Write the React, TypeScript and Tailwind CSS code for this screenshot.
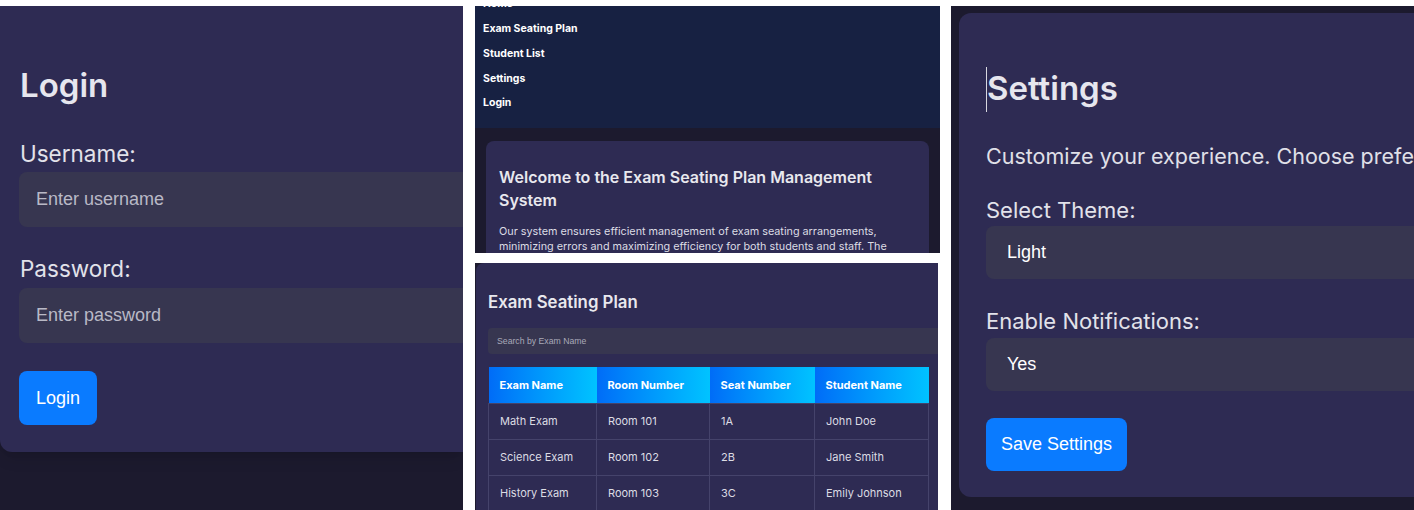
import React from "react";

const rows = [
  { exam: "Math Exam", room: "Room 101", seat: "1A", student: "John Doe" },
  { exam: "Science Exam", room: "Room 102", seat: "2B", student: "Jane Smith" },
  { exam: "History Exam", room: "Room 103", seat: "3C", student: "Emily Johnson" },
];

const heads = ["Exam Name", "Room Number", "Seat Number", "Student Name"];
const widths = ["w-[108px]", "w-[113px]", "w-[105px]", "w-[114px]"];

function LoginPanel() {
  return (
    <section className="w-[463px] shrink-0 h-full bg-[#1c1a2e] overflow-hidden">
      <div className="h-[446px] bg-[#2e2b53] rounded-bl-xl px-[19px] pt-[58px] shadow-lg">
        <h1 className="text-[33px] leading-[42px] font-semibold text-[#e6e6ee] pl-px">Login</h1>
        <label className="block mt-[34px] text-[22.5px] leading-[28px] text-[#e2e2ea] pl-px">Username:</label>
        <input
          placeholder="Enter username"
          className="mt-[4px] w-[480px] h-[55px] rounded-lg bg-[#373650] px-[17px] text-[18px] font-['Liberation_Sans',Arial,sans-serif] placeholder:text-[#b9b9c6] outline-none"
        />
        <label className="block mt-[28px] text-[22.5px] leading-[28px] text-[#e2e2ea] pl-px">Password:</label>
        <input
          placeholder="Enter password"
          className="mt-[5px] w-[480px] h-[55px] rounded-lg bg-[#373650] px-[17px] text-[18px] font-['Liberation_Sans',Arial,sans-serif] placeholder:text-[#b9b9c6] outline-none"
        />
        <button className="mt-[28px] h-[54px] w-[78px] rounded-lg bg-[#0a7bff] text-white text-[18px] font-['Liberation_Sans',Arial,sans-serif]">
          Login
        </button>
      </div>
    </section>
  );
}

function HomePanel() {
  return (
    <section className="h-[247px] shrink-0 bg-[#1c1a2e] overflow-hidden">
      <nav className="bg-[#172142] h-[122px] pl-[8px] flex flex-col">
        <ul className="-mt-[14px] text-[10.5px] font-bold text-white">
          {["Home", "Exam Seating Plan", "Student List", "Settings", "Login"].map((t) => (
            <li key={t} className="h-[24.7px] flex items-center">{t}</li>
          ))}
        </ul>
      </nav>
      <div className="px-[11px] pt-[13px]">
        <div className="bg-[#2e2b53] rounded-lg h-[140px] px-[13px] pt-[25px]">
          <h2 className="text-[16px] leading-[23px] font-semibold text-[#e8e8ee]">
            Welcome to the Exam Seating Plan Management System
          </h2>
          <p className="mt-[12px] text-[10.8px] leading-[15px] text-[#dcdce4]">
            Our system ensures efficient management of exam seating arrangements, minimizing errors and maximizing
            efficiency for both students and staff. The
          </p>
        </div>
      </div>
    </section>
  );
}

function PlanPanel() {
  return (
    <section className="h-[247px] w-[463px] shrink-0 bg-[#1c1a2e] overflow-hidden pl-px">
      <div className="h-full bg-[#2e2b53] rounded-tl-lg pl-[12px] pt-[27px]">
        <h2 className="text-[16.8px] leading-[24px] font-semibold text-[#e8e8ee]">Exam Seating Plan</h2>
        <input
          placeholder="Search by Exam Name"
          className="mt-[14px] w-[480px] h-[26px] rounded bg-[#373650] px-[9px] text-[8.7px] font-['Liberation_Sans',Arial,sans-serif] placeholder:text-[#a9a9b8] outline-none"
        />
        <table className="mt-[13px] border-collapse text-[11px]">
          <thead>
            <tr>
              {heads.map((h, i) => (
                <th
                  key={h}
                  className={`${widths[i]} h-[36px] px-[11px] text-left font-bold text-white bg-gradient-to-r from-[#006cf7] to-[#00c3ff]`}
                >
                  {h}
                </th>
              ))}
            </tr>
          </thead>
          <tbody>
            {rows.map((r) => (
              <tr key={r.exam}>
                {[r.exam, r.room, r.seat, r.student].map((c, i) => (
                  <td key={i} className="h-[36px] px-[11px] border border-[#45436b] text-[#dcdce4]">
                    {c}
                  </td>
                ))}
              </tr>
            ))}
          </tbody>
        </table>
      </div>
    </section>
  );
}

function SettingsPanel() {
  return (
    <section className="w-[463px] shrink-0 h-full bg-[#1c1a2e] pl-[8px] pt-[7px] overflow-hidden">
      <div className="h-[484px] w-[480px] bg-[#2e2b53] rounded-xl pl-[27px] pt-[54px]">
        <h1 className="relative text-[33px] leading-[43px] font-semibold text-[#e6e6ee] pl-px">
          <span className="absolute left-0 top-0 h-[45px] w-px bg-[#d8d8e0]" />
          Settings
        </h1>
        <p className="mt-[28px] text-[21.5px] leading-[37px] text-[#e0e0e8] whitespace-nowrap">
          Customize your experience. Choose preferences below.
        </p>
        <label className="block mt-[21px] text-[22px] leading-[28px] text-[#e2e2ea]">Select Theme:</label>
        <div className="mt-[2px] h-[53px] rounded-lg bg-[#373650] pl-[21px] flex items-center text-[18px] text-white font-['Liberation_Sans',Arial,sans-serif]">
          Light
        </div>
        <label className="block mt-[28px] text-[22px] leading-[28px] text-[#e2e2ea]">Enable Notifications:</label>
        <div className="mt-[3px] h-[53px] rounded-lg bg-[#373650] pl-[21px] flex items-center text-[18px] text-white font-['Liberation_Sans',Arial,sans-serif]">
          Yes
        </div>
        <button className="mt-[27px] h-[53px] px-[15px] rounded-lg bg-[#0a7bff] text-white text-[18px] font-['Liberation_Sans',Arial,sans-serif]">
          Save Settings
        </button>
      </div>
    </section>
  );
}

export default function App() {
  return (
    <div className="w-[1414px] h-[510px] bg-white pt-[6px] flex font-['Inter','Open_Sans',sans-serif] overflow-hidden">
      <LoginPanel />
      <div className="ml-[12px] w-[465px] shrink-0 h-full flex flex-col gap-[10px]">
        <HomePanel />
        <PlanPanel />
      </div>
      <div className="ml-[11px] h-full flex">
        <SettingsPanel />
      </div>
    </div>
  );
}
